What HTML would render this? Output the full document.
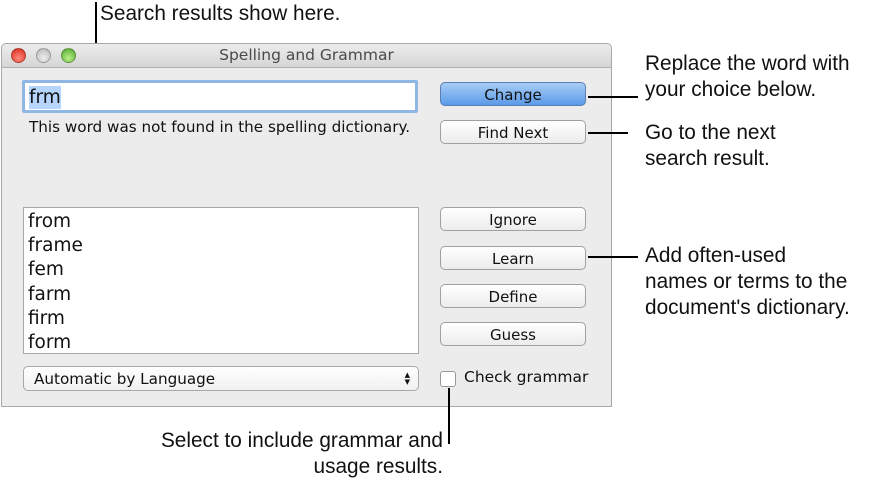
<!DOCTYPE html>
<html><head><style>
body{margin:0;width:892px;height:486px;background:#fff;position:relative;font-family:"Liberation Sans",sans-serif;overflow:hidden}
.a{position:absolute;font-size:20.8px;color:#111;line-height:26px}
.l{position:absolute;background:#000}
.win{position:absolute;left:1px;top:43px;width:611px;height:364px;background:#ececec;border:1px solid #a8a8a8;border-radius:5px 5px 0 0;box-sizing:border-box}
.tb{position:absolute;left:0;top:0;right:0;height:23px;background:linear-gradient(#ececec,#d6d6d6);border-bottom:1px solid #b0b0b0;border-radius:5px 5px 0 0;text-align:center;font-size:15.5px;line-height:23px;color:#4a4a4a;font-family:"DejaVu Sans",sans-serif}
.dot{position:absolute;top:4px;width:15px;height:15px;border-radius:50%;box-sizing:border-box;border:1px solid rgba(0,0,0,.25)}
.s{font-family:"DejaVu Sans",sans-serif;color:#111}
.btn{position:absolute;left:440px;width:146px;height:24px;border:1px solid #a0a0a0;border-radius:5px;background:linear-gradient(#fff,#ececec);box-sizing:border-box;text-align:center;font-size:15px;line-height:24px}
</style></head><body>
<div class="l" style="left:95px;top:2px;width:2px;height:76px"></div>
<div class="a" style="left:100px;top:1px">Search results show here.</div>
<div class="win">
 <div class="tb">Spelling and Grammar
  <div class="dot" style="left:9px;background:radial-gradient(circle at 50% 70%,#ff8a7a,#d8261c)"></div>
  <div class="dot" style="left:34px;background:radial-gradient(circle at 50% 70%,#eee,#b5b5b5)"></div>
  <div class="dot" style="left:59px;background:radial-gradient(circle at 50% 70%,#b8f08a,#4fa52a)"></div>
 </div>
</div>
<div class="s" style="position:absolute;left:22px;top:80px;width:396px;height:33px;border:3px solid #8fb6e4;box-sizing:border-box;background:#fff;border-radius:2px">
 <span style="position:absolute;left:4px;top:3px;background:#b5d5fd;font-size:18.5px;line-height:23px">frm</span></div>
<div class="s" style="position:absolute;left:29px;top:118px;font-size:15.2px">This word was not found in the spelling dictionary.</div>
<div class="btn s" style="top:82px;background:linear-gradient(#a8cdf6,#5a9ae8);border-color:#5a7fb0">Change</div>
<div class="btn s" style="top:120px">Find Next</div>
<div class="btn s" style="top:207px">Ignore</div>
<div class="btn s" style="top:246px">Learn</div>
<div class="btn s" style="top:284px">Define</div>
<div class="btn s" style="top:322px">Guess</div>
<div class="s" style="position:absolute;left:23px;top:207px;width:396px;height:147px;background:#fff;border:1px solid #a8a8a8;box-sizing:border-box;padding:2px 0 0 4px;font-size:18.5px;line-height:24.2px;overflow:hidden">from<br>frame<br>fem<br>farm<br>firm<br>form</div>
<div class="s" style="position:absolute;left:23px;top:366px;width:396px;height:25px;border:1px solid #a8a8a8;border-radius:5px;box-sizing:border-box;background:linear-gradient(#fff,#f0f0f0);font-size:15.2px;line-height:24px;padding-left:10px">Automatic by Language<span style="position:absolute;right:8px;font-size:7px;line-height:7px;top:5px">▲<br>▼</span></div>
<div style="position:absolute;left:440px;top:371px;width:16px;height:16px;border:1px solid #999;border-radius:3px;background:#fff;box-sizing:border-box"></div>
<div class="s" style="position:absolute;left:464px;top:368px;font-size:15.5px">Check grammar</div>
<div class="l" style="left:588px;top:96px;width:50px;height:2px"></div>
<div class="a" style="left:645px;top:51px">Replace the word with<br>your choice below.</div>
<div class="l" style="left:588px;top:132px;width:40px;height:2px"></div>
<div class="a" style="left:645px;top:120px">Go to the next<br>search result.</div>
<div class="l" style="left:588px;top:256px;width:50px;height:2px"></div>
<div class="a" style="left:645px;top:243px">Add often-used<br>names or terms to the<br>document's dictionary.</div>
<div class="l" style="left:448px;top:388px;width:2px;height:56px"></div>
<div class="a" style="right:449px;top:428px;text-align:right">Select to include grammar and<br>usage results.</div>
</body></html>
